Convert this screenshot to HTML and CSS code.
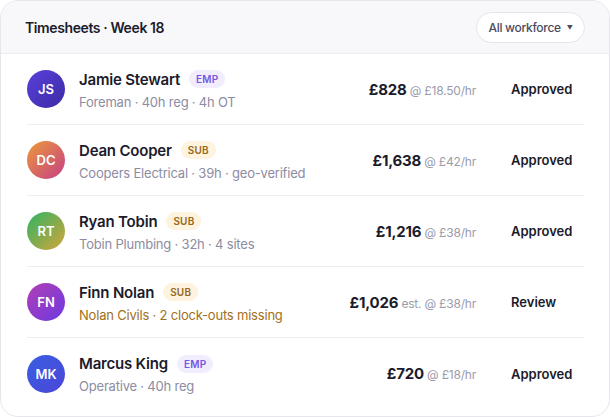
FILE: index.html
```html
<!DOCTYPE html>
<html lang="en">
  <head>
    <meta charset="UTF-8" />
    <meta name="viewport" content="width=device-width, initial-scale=1.0" />
    <title>Timesheets · Week 18</title>
    <link rel="stylesheet" href="styles.css">
  </head>
  <body>
    <div class="sheet-card">
      <div class="sheet-header">
        <h1 class="sheet-title">Timesheets · Week 18</h1>
        <button class="filter-btn">All workforce <span class="caret">▼</span></button>
      </div>

      <ul class="worker-list">
        <li class="worker-row">
          <div class="avatar av-js">JS</div>
          <div class="worker-info">
            <div class="worker-name">Jamie Stewart <span class="tag tag-emp">EMP</span></div>
            <div class="worker-meta">Foreman · 40h reg · 4h OT</div>
          </div>
          <div class="worker-pay"><strong>£828</strong> <span class="rate">@ £18.50/hr</span></div>
          <div class="worker-status">Approved</div>
        </li>
        <li class="worker-row">
          <div class="avatar av-dc">DC</div>
          <div class="worker-info">
            <div class="worker-name">Dean Cooper <span class="tag tag-sub">SUB</span></div>
            <div class="worker-meta">Coopers Electrical · 39h · geo-verified</div>
          </div>
          <div class="worker-pay"><strong>£1,638</strong> <span class="rate">@ £42/hr</span></div>
          <div class="worker-status">Approved</div>
        </li>
        <li class="worker-row">
          <div class="avatar av-rt">RT</div>
          <div class="worker-info">
            <div class="worker-name">Ryan Tobin <span class="tag tag-sub">SUB</span></div>
            <div class="worker-meta">Tobin Plumbing · 32h · 4 sites</div>
          </div>
          <div class="worker-pay"><strong>£1,216</strong> <span class="rate">@ £38/hr</span></div>
          <div class="worker-status">Approved</div>
        </li>
        <li class="worker-row">
          <div class="avatar av-fn">FN</div>
          <div class="worker-info">
            <div class="worker-name">Finn Nolan <span class="tag tag-sub">SUB</span></div>
            <div class="worker-meta meta-warn">Nolan Civils · 2 clock-outs missing</div>
          </div>
          <div class="worker-pay"><strong>£1,026</strong> <span class="rate">est. @ £38/hr</span></div>
          <div class="worker-status">Review</div>
        </li>
        <li class="worker-row">
          <div class="avatar av-mk">MK</div>
          <div class="worker-info">
            <div class="worker-name">Marcus King <span class="tag tag-emp">EMP</span></div>
            <div class="worker-meta">Operative · 40h reg</div>
          </div>
          <div class="worker-pay"><strong>£720</strong> <span class="rate">@ £18/hr</span></div>
          <div class="worker-status">Approved</div>
        </li>
      </ul>
    </div>
  </body>
</html>
```

FILE: styles.css
```css
* {
  box-sizing: border-box;
}
body {
  margin: 0;
  font-family: "Inter", "Noto Sans", sans-serif;
  background: #ffffff;
  color: #1b1b2b;
}
.sheet-card {
  width: 610px;
  height: 417px;
  border: 1px solid #e6e6ec;
  border-radius: 18px;
  overflow: hidden;
  background: white;
}
.sheet-header {
  height: 53px;
  display: flex;
  align-items: center;
  justify-content: space-between;
  padding: 0 24px 0 24px;
  background: #f8f8fb;
  border-bottom: 1px solid #ececf1;
}
.sheet-title {
  margin: 0;
  font-size: 14px;
  font-weight: 600;
  letter-spacing: -0.4px;
  color: #1b1b2b;
}
.filter-btn {
  width: 109px;
  height: 31px;
  padding: 0;
  border: 1px solid #e4e4ea;
  border-radius: 16px;
  background: white;
  font-family: inherit;
  font-size: 12px;
  font-weight: 500;
  letter-spacing: -0.3px;
  color: #4a4a5c;
}
.caret {
  font-size: 6px;
  margin-left: 3px;
  vertical-align: 2px;
}
.worker-list {
  list-style: none;
  margin: 0 25px 0 26px;
  padding: 0;
}
.worker-row {
  display: flex;
  align-items: center;
  height: 71px;
  border-bottom: 1px solid #ececf1;
}
.worker-row:last-child {
  border-bottom: none;
}
.avatar {
  width: 38px;
  height: 38px;
  border-radius: 50%;
  flex-shrink: 0;
  display: flex;
  align-items: center;
  justify-content: center;
  color: white;
  font-size: 13px;
  font-weight: 600;
}
.av-js {
  background: linear-gradient(135deg, #5b40dc, #3b2ba3);
}
.av-dc {
  background: linear-gradient(135deg, #ec9a3a, #c63e85);
}
.av-rt {
  background: linear-gradient(135deg, #2fb363, #d4a53a);
}
.av-fn {
  background: linear-gradient(135deg, #b23eb4, #6c3ae2);
}
.av-mk {
  background: linear-gradient(135deg, #3a5ee2, #4b46d8);
}
.worker-info {
  flex: 1;
  margin-left: 14px;
  padding-top: 1px;
}
.worker-name {
  display: flex;
  align-items: center;
  font-size: 15px;
  font-weight: 600;
  color: #1b1b2b;
  letter-spacing: -0.2px;
}
.tag {
  margin-left: 9px;
  padding: 3px 7px;
  border-radius: 9px;
  font-size: 10px;
  font-weight: 600;
  letter-spacing: 0.2px;
}
.tag-emp {
  background: #f1edfd;
  color: #7656e4;
}
.tag-sub {
  background: #fdf3df;
  color: #98681a;
}
.worker-meta {
  margin-top: 5px;
  font-size: 13px;
  letter-spacing: -0.2px;
  color: #8c8ca2;
}
.meta-warn {
  color: #a2701c;
}
.worker-pay {
  font-size: 12px;
  letter-spacing: -0.2px;
  color: #9b9bab;
  white-space: nowrap;
}
.worker-pay strong {
  font-size: 15px;
  font-weight: 700;
  letter-spacing: -0.2px;
  color: #1b1b2b;
}
.worker-status {
  width: 73px;
  margin-left: 35px;
  font-size: 13px;
  font-weight: 600;
  color: #1b1b2b;
}
```
